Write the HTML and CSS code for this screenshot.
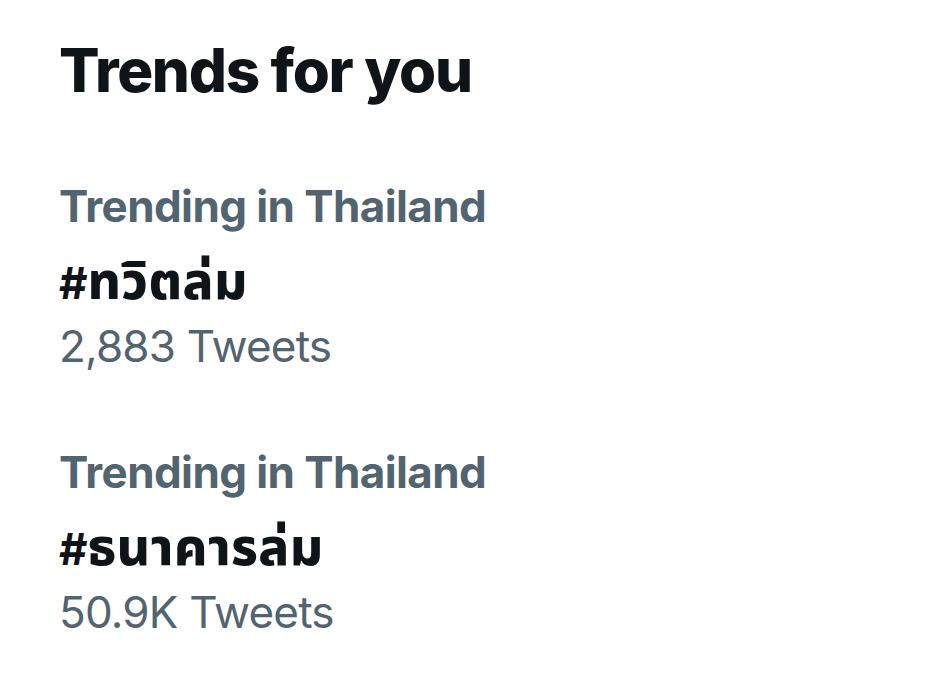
FILE: index.html
```html
<!DOCTYPE html>
<html lang="th">
<head>
<meta charset="utf-8">
<title>Trends for you</title>
<link rel="stylesheet" href="styles.css">
</head>
<body>
<main class="panel">
  <h1 class="title">Trends for you</h1>
  <section class="trend">
    <div class="trend-meta">Trending in Thailand</div>
    <div class="trend-name">#<span class="thai">ทวิตล่ม</span></div>
    <div class="trend-count">2,883 Tweets</div>
  </section>
  <section class="trend">
    <div class="trend-meta">Trending in Thailand</div>
    <div class="trend-name">#<span class="thai">ธนาคารล่ม</span></div>
    <div class="trend-count">50.9K Tweets</div>
  </section>
</main>
</body>
</html>
```
FILE: styles.css
```css
html, body {
  margin: 0;
  padding: 0;
  background: #ffffff;
}
body {
  font-family: Inter, "Noto Sans", "Noto Sans Thai", "Liberation Sans", sans-serif;
  -webkit-font-smoothing: antialiased;
}
.panel {
  padding: 34px 0 0 59px;
  display: flex;
  flex-direction: column;
  gap: 74px;
}
.title {
  margin: 0;
  font-size: 60px;
  line-height: 72px;
  font-weight: 800;
  color: #0f1419;
  letter-spacing: -1.3px;
}
.trend {
  display: flex;
  flex-direction: column;
}
.trend-meta {
  font-size: 44px;
  line-height: 52px;
  font-weight: 700;
  color: #536471;
  letter-spacing: -0.6px;
}
.trend-name {
  margin-top: 23px;
  height: 52px;
  font-size: 44px;
  line-height: 52px;
  font-weight: 700;
  color: #0f1419;
}
.thai {
  font-size: 51px;
  font-weight: 800;
  letter-spacing: 0.5px;
}
.trend-count {
  margin-top: 13px;
  font-size: 44px;
  line-height: 52px;
  font-weight: 400;
  color: #536471;
  letter-spacing: -0.8px;
}
```
